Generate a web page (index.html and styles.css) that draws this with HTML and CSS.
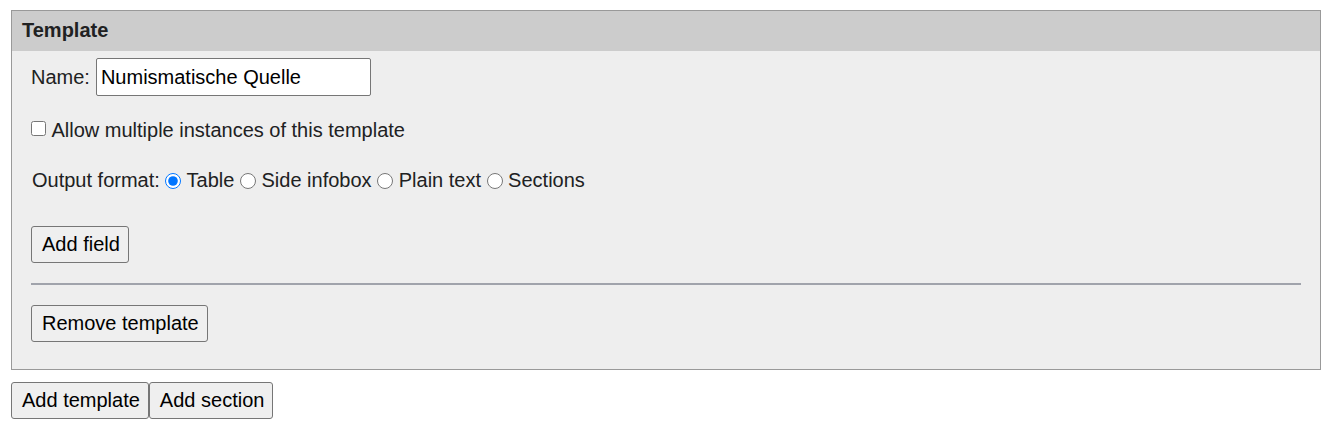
FILE: index.html
```html
<!DOCTYPE html>
<html lang="en">
<head>
<meta charset="utf-8">
<title>Template</title>
<link rel="stylesheet" href="styles.css">
</head>
<body>
<div class="page">
  <div class="template-box">
    <div class="template-head">Template</div>
    <div class="template-body">
      <div class="row row-name">
        <label class="lbl" for="tname">Name:</label>
        <input id="tname" class="text-input" type="text" value="Numismatische Quelle">
      </div>
      <div class="row row-check">
        <label><input class="check" type="checkbox"> Allow multiple instances of this template</label>
      </div>
      <div class="row row-format">
        Output format: <input class="radio" type="radio" name="fmt" checked> Table <input class="radio" type="radio" name="fmt"> Side infobox <input class="radio" type="radio" name="fmt"> Plain text <input class="radio" type="radio" name="fmt"> Sections
      </div>
      <div class="row row-btn">
        <button class="btn" type="button">Add field</button>
      </div>
      <hr class="divider">
      <div class="row row-btn row-remove">
        <button class="btn" type="button">Remove template</button>
      </div>
    </div>
  </div>
  <div class="actions"><button class="btn" type="button">Add template</button><button class="btn" type="button">Add section</button></div>
</div>
</body>
</html>
```
FILE: styles.css
```css
html, body {
  margin: 0;
  padding: 0;
  background: #ffffff;
}

body {
  font-family: "Liberation Sans", Arial, sans-serif;
  font-size: 20px;
  line-height: 23px;
  color: #202122;
}

.page {
  padding: 10px 0 0 11px;
}

.template-box {
  width: 1308px;
  border: 1px solid #999999;
  background: #eeeeee;
}

.template-head {
  background: #cccccc;
  font-weight: bold;
  height: 40px;
  box-sizing: border-box;
  padding: 8px 10px 9px;
  color: #202122;
}

.template-body {
  padding: 7px 19px 27px 19px;
}

.row-name {
  display: flex;
  align-items: baseline;
  gap: 6px;
}

.text-input {
  box-sizing: border-box;
  width: 275px;
  height: 38px;
  margin: 0;
  padding: 0 4px;
  border: 1px solid #767676;
  border-radius: 2px;
  background: #ffffff;
  font-family: inherit;
  font-size: 20px;
  color: #000000;
}

.row-check {
  margin-top: 23px;
}

.check {
  width: 15px;
  height: 15px;
  margin: 0 1px 0 0;
  vertical-align: 1px;
}

.row-format {
  margin-top: 27px;
  padding-left: 1px;
}

.radio {
  width: 16px;
  height: 16px;
  margin: 0;
  vertical-align: -2px;
}

.row-btn {
  display: flex;
  margin-top: 34px;
}

.divider {
  margin: 20px 0 0;
  height: 0;
  border: 0;
  border-top: 2px solid #a0a3ab;
}

.row-remove {
  margin-top: 20px;
}

.btn {
  box-sizing: border-box;
  height: 37px;
  margin: 0;
  padding: 6px 8px 6px 10px;
  border: 1px solid #767676;
  border-radius: 3px;
  background: #efefef;
  font-family: inherit;
  font-size: 20px;
  line-height: 23px;
  color: #000000;
}

.actions {
  display: flex;
  margin-top: 12px;
}
```
